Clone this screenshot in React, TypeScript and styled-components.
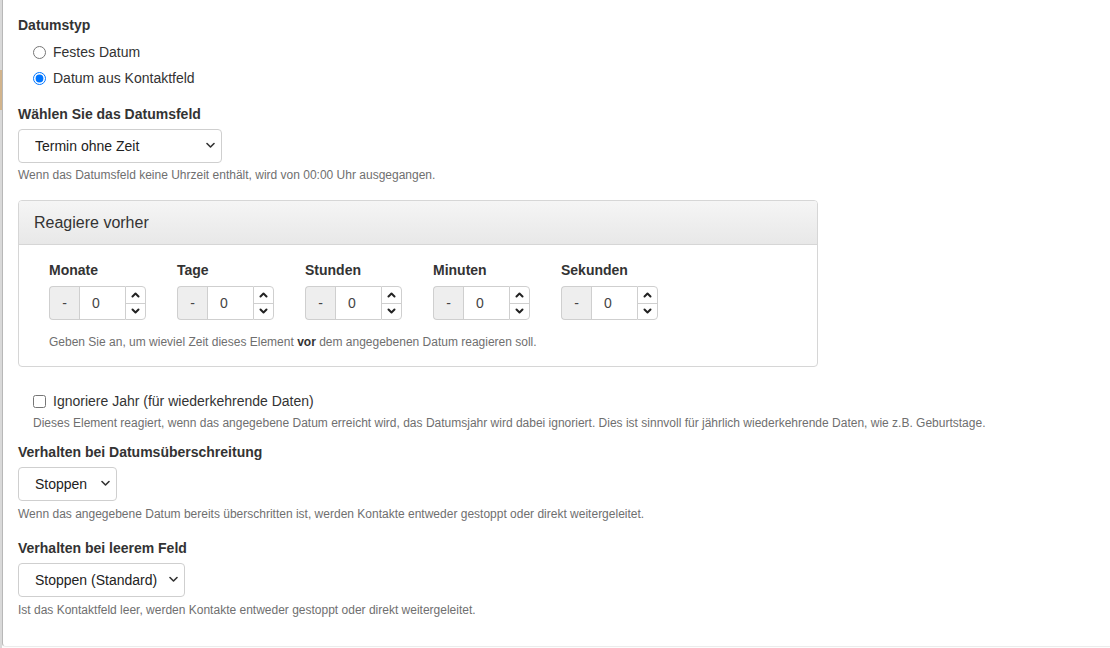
import React from "react";
import styled, { createGlobalStyle } from "styled-components";

const GlobalStyle = createGlobalStyle`
  html, body { margin: 0; padding: 0; background: #fdfdfd; }
  body {
    font-family: "Liberation Sans", Arial, Helvetica, sans-serif;
    font-size: 14px;
    line-height: 20px;
    color: #333;
  }
  * { box-sizing: border-box; }
`;

const Page = styled.div`
  display: flex;
  width: 1110px;
  height: 648px;
  overflow: hidden;
`;

const SideStrip = styled.div`
  width: 2px;
  flex: none;
  background: #d9d9d9;
  display: flex;
  flex-direction: column;
`;

const SideMarker = styled.div`
  margin-top: 70px;
  height: 40px;
  background: #d2b48c;
`;

const Sheet = styled.div`
  flex: 1;
  height: 647px;
  background: #fff;
  border-left: 1px solid #b8b8b8;
  border-bottom: 1px solid #ececec;
  border-bottom-left-radius: 4px;
  padding: 15px 15px 0 15px;
  display: flex;
  flex-direction: column;
  align-items: flex-start;
`;

const Label = styled.div<{ $mt?: number }>`
  font-weight: bold;
  font-size: 14px;
  line-height: 20px;
  color: #333;
  margin-top: ${(p) => p.$mt ?? 0}px;
`;

const ChoiceList = styled.div<{ $mt?: number }>`
  display: flex;
  flex-direction: column;
  gap: 6px;
  margin-top: ${(p) => p.$mt ?? 0}px;
  padding-left: 15px;
`;

const Choice = styled.label`
  display: flex;
  align-items: center;
  gap: 7px;
  font-size: 14px;
  line-height: 20px;
  color: #333;
  cursor: pointer;

  input {
    margin: 0;
    width: 13px;
    height: 13px;
  }
`;

const Help = styled.div<{ $mt?: number; $indent?: number }>`
  font-size: 12px;
  line-height: 17px;
  color: #6f6f6f;
  margin-top: ${(p) => p.$mt ?? 4}px;
  padding-left: ${(p) => p.$indent ?? 0}px;

  b { color: #333; }
`;

const SelectWrap = styled.div<{ $w: number; $mt?: number }>`
  position: relative;
  width: ${(p) => p.$w}px;
  height: 34px;
  margin-top: ${(p) => p.$mt ?? 5}px;
`;

const NativeSelect = styled.select`
  appearance: none;
  -webkit-appearance: none;
  width: 100%;
  height: 100%;
  border: 1px solid #cfcfcf;
  border-radius: 4px;
  background: #fff;
  padding: 0 26px 0 16px;
  font-family: "Liberation Sans", Arial, Helvetica, sans-serif;
  font-size: 14px;
  color: #222;
`;

const Chevron = styled.svg`
  position: absolute;
  right: 7px;
  top: 13px;
  width: 9px;
  height: 7px;
  pointer-events: none;
`;

function Select({ width, value, mt }: { width: number; value: string; mt?: number }) {
  return (
    <SelectWrap $w={width} $mt={mt}>
      <NativeSelect defaultValue={value}>
        <option>{value}</option>
      </NativeSelect>
      <Chevron viewBox="0 0 9 7">
        <path d="M1 1.5 L4.5 5 L8 1.5" fill="none" stroke="#333" strokeWidth="1.6" strokeLinecap="round" strokeLinejoin="round" />
      </Chevron>
    </SelectWrap>
  );
}

const Card = styled.div`
  width: 800px;
  margin-top: 16px;
  border: 1px solid #d6d6d6;
  border-radius: 4px;
  overflow: hidden;
  background: #fff;
`;

const CardHeader = styled.div`
  height: 44px;
  display: flex;
  align-items: center;
  padding: 0 15px;
  background: linear-gradient(#f5f5f5, #e8e8e8);
  border-bottom: 1px solid #d6d6d6;
  font-size: 16px;
  color: #333;
`;

const CardBody = styled.div`
  padding: 15px 30px 15px 30px;
`;

const UnitRow = styled.div`
  display: grid;
  grid-template-columns: repeat(5, 128px);
`;

const Unit = styled.div`
  display: flex;
  flex-direction: column;
  align-items: flex-start;
`;

const Spinner = styled.div`
  display: flex;
  height: 34px;
  margin-top: 6px;
`;

const Addon = styled.div`
  width: 30px;
  display: flex;
  align-items: center;
  justify-content: center;
  background: #eee;
  border: 1px solid #cfcfcf;
  border-right: none;
  border-radius: 4px 0 0 4px;
  color: #444;
  font-size: 14px;
`;

const NumberField = styled.input`
  width: 46px;
  height: 100%;
  border: 1px solid #cfcfcf;
  border-right: none;
  padding: 0 0 0 12px;
  font-family: "Liberation Sans", Arial, Helvetica, sans-serif;
  font-size: 14px;
  color: #444;
  outline: none;
`;

const Steps = styled.div`
  width: 21px;
  display: flex;
  flex-direction: column;
  border: 1px solid #cfcfcf;
  border-radius: 0 4px 4px 0;
`;

const Step = styled.div<{ $first?: boolean }>`
  flex: 1;
  display: flex;
  align-items: center;
  justify-content: center;
  border-top: ${(p) => (p.$first ? "none" : "1px solid #cfcfcf")};
`;

const Caret = styled.svg`
  width: 9px;
  height: 6px;
`;

function UnitInput({ label }: { label: string }) {
  return (
    <Unit>
      <Label>{label}</Label>
      <Spinner>
        <Addon>-</Addon>
        <NumberField defaultValue="0" />
        <Steps>
          <Step $first>
            <Caret viewBox="0 0 9 6">
              <path d="M1.5 4.5 L4.5 1.5 L7.5 4.5" fill="none" stroke="#222" strokeWidth="2" strokeLinecap="round" strokeLinejoin="round" />
            </Caret>
          </Step>
          <Step>
            <Caret viewBox="0 0 9 6">
              <path d="M1.5 1.5 L4.5 4.5 L7.5 1.5" fill="none" stroke="#222" strokeWidth="2" strokeLinecap="round" strokeLinejoin="round" />
            </Caret>
          </Step>
        </Steps>
      </Spinner>
    </Unit>
  );
}

export default function App() {
  return (
    <>
      <GlobalStyle />
      <Page>
        <SideStrip>
          <SideMarker />
        </SideStrip>
        <Sheet>
          <Label>Datumstyp</Label>
          <ChoiceList $mt={7}>
            <Choice>
              <input type="radio" name="dtype" />
              Festes Datum
            </Choice>
            <Choice>
              <input type="radio" name="dtype" defaultChecked />
              Datum aus Kontaktfeld
            </Choice>
          </ChoiceList>

          <Label $mt={16}>Wählen Sie das Datumsfeld</Label>
          <Select width={204} value="Termin ohne Zeit" />
          <Help>Wenn das Datumsfeld keine Uhrzeit enthält, wird von 00:00 Uhr ausgegangen.</Help>

          <Card>
            <CardHeader>Reagiere vorher</CardHeader>
            <CardBody>
              <UnitRow>
                <UnitInput label="Monate" />
                <UnitInput label="Tage" />
                <UnitInput label="Stunden" />
                <UnitInput label="Minuten" />
                <UnitInput label="Sekunden" />
              </UnitRow>
              <Help $mt={14}>
                Geben Sie an, um wieviel Zeit dieses Element <b>vor</b> dem angegebenen Datum reagieren soll.
              </Help>
            </CardBody>
          </Card>

          <ChoiceList $mt={24}>
            <Choice>
              <input type="checkbox" />
              Ignoriere Jahr (für wiederkehrende Daten)
            </Choice>
          </ChoiceList>
          <Help $indent={15}>
            Dieses Element reagiert, wenn das angegebene Datum erreicht wird, das Datumsjahr wird dabei ignoriert. Dies ist sinnvoll für jährlich wiederkehrende Daten, wie z.B. Geburtstage.
          </Help>

          <Label $mt={10}>Verhalten bei Datumsüberschreitung</Label>
          <Select width={99} value="Stoppen" />
          <Help $mt={5}>Wenn das angegebene Datum bereits überschritten ist, werden Kontakte entweder gestoppt oder direkt weitergeleitet.</Help>

          <Label $mt={15}>Verhalten bei leerem Feld</Label>
          <Select width={167} value="Stoppen (Standard)" />
          <Help $mt={5}>Ist das Kontaktfeld leer, werden Kontakte entweder gestoppt oder direkt weitergeleitet.</Help>
        </Sheet>
      </Page>
    </>
  );
}
